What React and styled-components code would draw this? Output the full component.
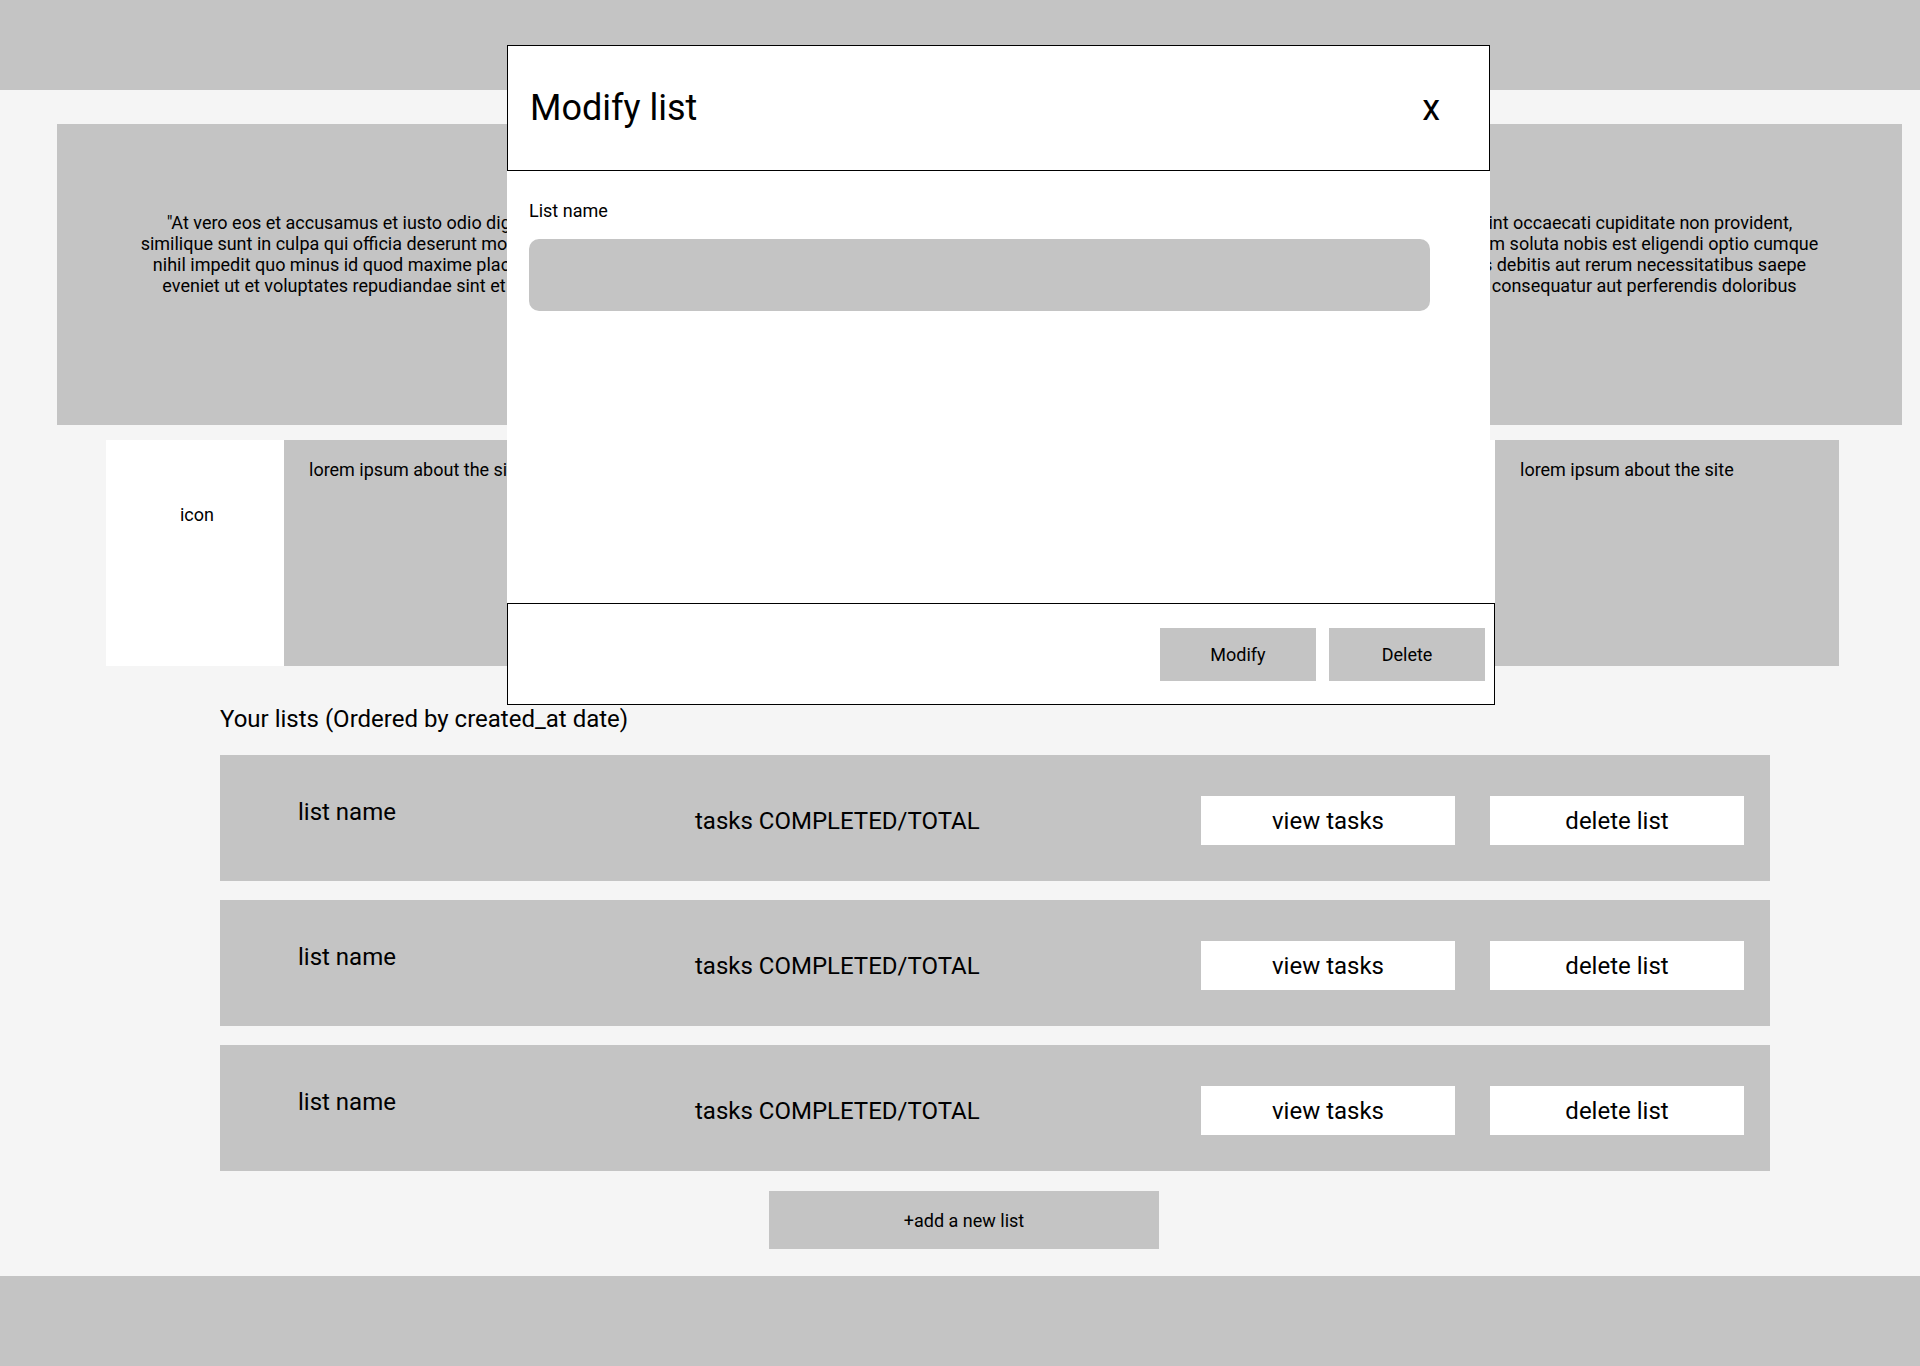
import React from "react";
import styled, { createGlobalStyle } from "styled-components";

const GlobalStyle = createGlobalStyle`
  html, body {
    margin: 0;
    padding: 0;
  }
  body {
    font-family: Roboto, "Noto Sans", "Liberation Sans", sans-serif;
    color: #000;
    background: #f5f5f5;
  }
  *, *::before, *::after {
    box-sizing: border-box;
  }
`;

const GRAY = "#c4c4c4";

const Page = styled.div`
  position: relative;
  width: 1920px;
  min-height: 1366px;
  background: #f5f5f5;
  display: flex;
  flex-direction: column;
`;

const TopBar = styled.header`
  height: 90px;
  background: ${GRAY};
`;

const Main = styled.main`
  display: flex;
  flex-direction: column;
  padding-top: 34px;
`;

const Hero = styled.section`
  margin: 0 18px 0 57px;
  height: 301px;
  background: ${GRAY};
  padding-top: 88px;
  text-align: center;
  font-size: 18px;
  line-height: 21px;
`;

const HeroLine = styled.span`
  display: block;
  white-space: nowrap;
`;

const Features = styled.section`
  margin: 15px 0 0 106px;
  width: 1733px;
  height: 226px;
  display: flex;
  justify-content: space-between;
`;

const Feature = styled.div`
  display: flex;
  width: 522px;
`;

const IconCell = styled.div`
  width: 178px;
  background: #fff;
  padding: 64px 0 0 4px;
  text-align: center;
  font-size: 18px;
  line-height: 21px;
`;

const FeatureText = styled.div`
  flex: 1;
  background: ${GRAY};
  padding: 19px 25px;
  font-size: 18px;
  line-height: 21px;
`;

const ListsSection = styled.section`
  margin: 39px 0 0 220px;
  width: 1550px;
`;

const SectionTitle = styled.h2`
  margin: 0;
  font-size: 24px;
  line-height: 28px;
  font-weight: 400;
`;

const ListStack = styled.div`
  margin-top: 22px;
  display: flex;
  flex-direction: column;
  gap: 19px;
`;

const ListRow = styled.div`
  height: 126px;
  background: ${GRAY};
  display: flex;
  align-items: center;
  padding: 41px 26px 36px 78px;
`;

const ListName = styled.div`
  flex: none;
  width: 397px;
  align-self: flex-start;
  margin-top: 2px;
  font-size: 24px;
  line-height: 28px;
`;

const TaskCount = styled.div`
  flex: 1;
  font-size: 24px;
  line-height: 28px;
`;

const RowActions = styled.div`
  display: flex;
  gap: 35px;
`;

const RowButton = styled.button`
  width: 254px;
  height: 49px;
  background: #fff;
  border: none;
  padding: 0;
  font-family: Roboto, "Noto Sans", sans-serif;
  font-size: 24px;
  color: #000;
`;

const AddButton = styled.button`
  margin: 20px 0 0 769px;
  width: 390px;
  height: 58px;
  background: ${GRAY};
  border: none;
  padding: 0;
  font-family: Roboto, "Noto Sans", sans-serif;
  font-size: 18px;
  color: #000;
`;

const BottomBar = styled.footer`
  margin-top: 27px;
  height: 90px;
  background: ${GRAY};
`;

/* Modal */
const Modal = styled.div`
  position: absolute;
  top: 45px;
  left: 507px;
  width: 983px;
`;

const ModalHeader = styled.div`
  height: 126px;
  border: 1px solid #000;
  background: #fff;
  display: flex;
  align-items: center;
  justify-content: space-between;
  padding: 0 49px 0 22px;
`;

const ModalTitle = styled.h1`
  margin: 0;
  font-size: 36px;
  line-height: 1;
  font-weight: 400;
`;

const CloseButton = styled.button`
  background: none;
  border: none;
  padding: 0;
  font-family: Roboto, "Noto Sans", sans-serif;
  font-size: 36px;
  line-height: 1;
  color: #000;
`;

const ModalBody = styled.div`
  height: 432px;
  background: #fff;
  padding: 29px 22px 0 22px;
`;

const FieldLabel = styled.label`
  display: block;
  font-size: 18px;
  line-height: 21px;
`;

const TextInput = styled.div`
  margin-top: 18px;
  width: 901px;
  height: 72px;
  border-radius: 10px;
  background: ${GRAY};
`;

const ModalFooter = styled.div`
  width: 988px;
  height: 102px;
  border: 1px solid #000;
  background: #fff;
  display: flex;
  justify-content: flex-end;
  align-items: center;
  gap: 13px;
  padding-right: 9px;
`;

const FooterButton = styled.button`
  width: 156px;
  height: 53px;
  background: ${GRAY};
  border: none;
  padding: 0;
  font-family: Roboto, "Noto Sans", sans-serif;
  font-size: 18px;
  color: #000;
`;

const heroLines = [
  "\"At vero eos et accusamus et iusto odio dignissimos ducimus qui blanditiis praesentium voluptatum deleniti atque corrupti quos dolores et quas molestias excepturi sint occaecati cupiditate non provident,",
  "similique sunt in culpa qui officia deserunt mollitia animi, id est laborum et dolorum fuga. Et harum quidem rerum facilis est et expedita distinctio. Nam libero tempore, cum soluta nobis est eligendi optio cumque",
  "nihil impedit quo minus id quod maxime placeat facere possimus, omnis voluptas assumenda est, omnis dolor repellendus. Temporibus autem quibusdam et aut officiis debitis aut rerum necessitatibus saepe",
  "eveniet ut et voluptates repudiandae sint et molestiae non recusandae. Itaque earum rerum hic tenetur a sapiente delectus, ut aut reiciendis voluptatibus maiores alias consequatur aut perferendis doloribus",
];

export default function App() {
  return (
    <>
      <GlobalStyle />
      <Page>
        <TopBar />
        <Main>
          <Hero>
            {heroLines.map((l, i) => (
              <HeroLine key={i}>{l}</HeroLine>
            ))}
          </Hero>
          <Features>
            {[0, 1, 2].map((i) => (
              <Feature key={i}>
                <IconCell>icon</IconCell>
                <FeatureText>lorem ipsum about the site</FeatureText>
              </Feature>
            ))}
          </Features>
          <ListsSection>
            <SectionTitle>Your lists (Ordered by created_at date)</SectionTitle>
            <ListStack>
              {[0, 1, 2].map((i) => (
                <ListRow key={i}>
                  <ListName>list name</ListName>
                  <TaskCount>tasks COMPLETED/TOTAL</TaskCount>
                  <RowActions>
                    <RowButton>view tasks</RowButton>
                    <RowButton>delete list</RowButton>
                  </RowActions>
                </ListRow>
              ))}
            </ListStack>
          </ListsSection>
          <AddButton>+add a new list</AddButton>
        </Main>
        <BottomBar />

        <Modal>
          <ModalHeader>
            <ModalTitle>Modify list</ModalTitle>
            <CloseButton>x</CloseButton>
          </ModalHeader>
          <ModalBody>
            <FieldLabel>List name</FieldLabel>
            <TextInput />
          </ModalBody>
          <ModalFooter>
            <FooterButton>Modify</FooterButton>
            <FooterButton>Delete</FooterButton>
          </ModalFooter>
        </Modal>
      </Page>
    </>
  );
}
